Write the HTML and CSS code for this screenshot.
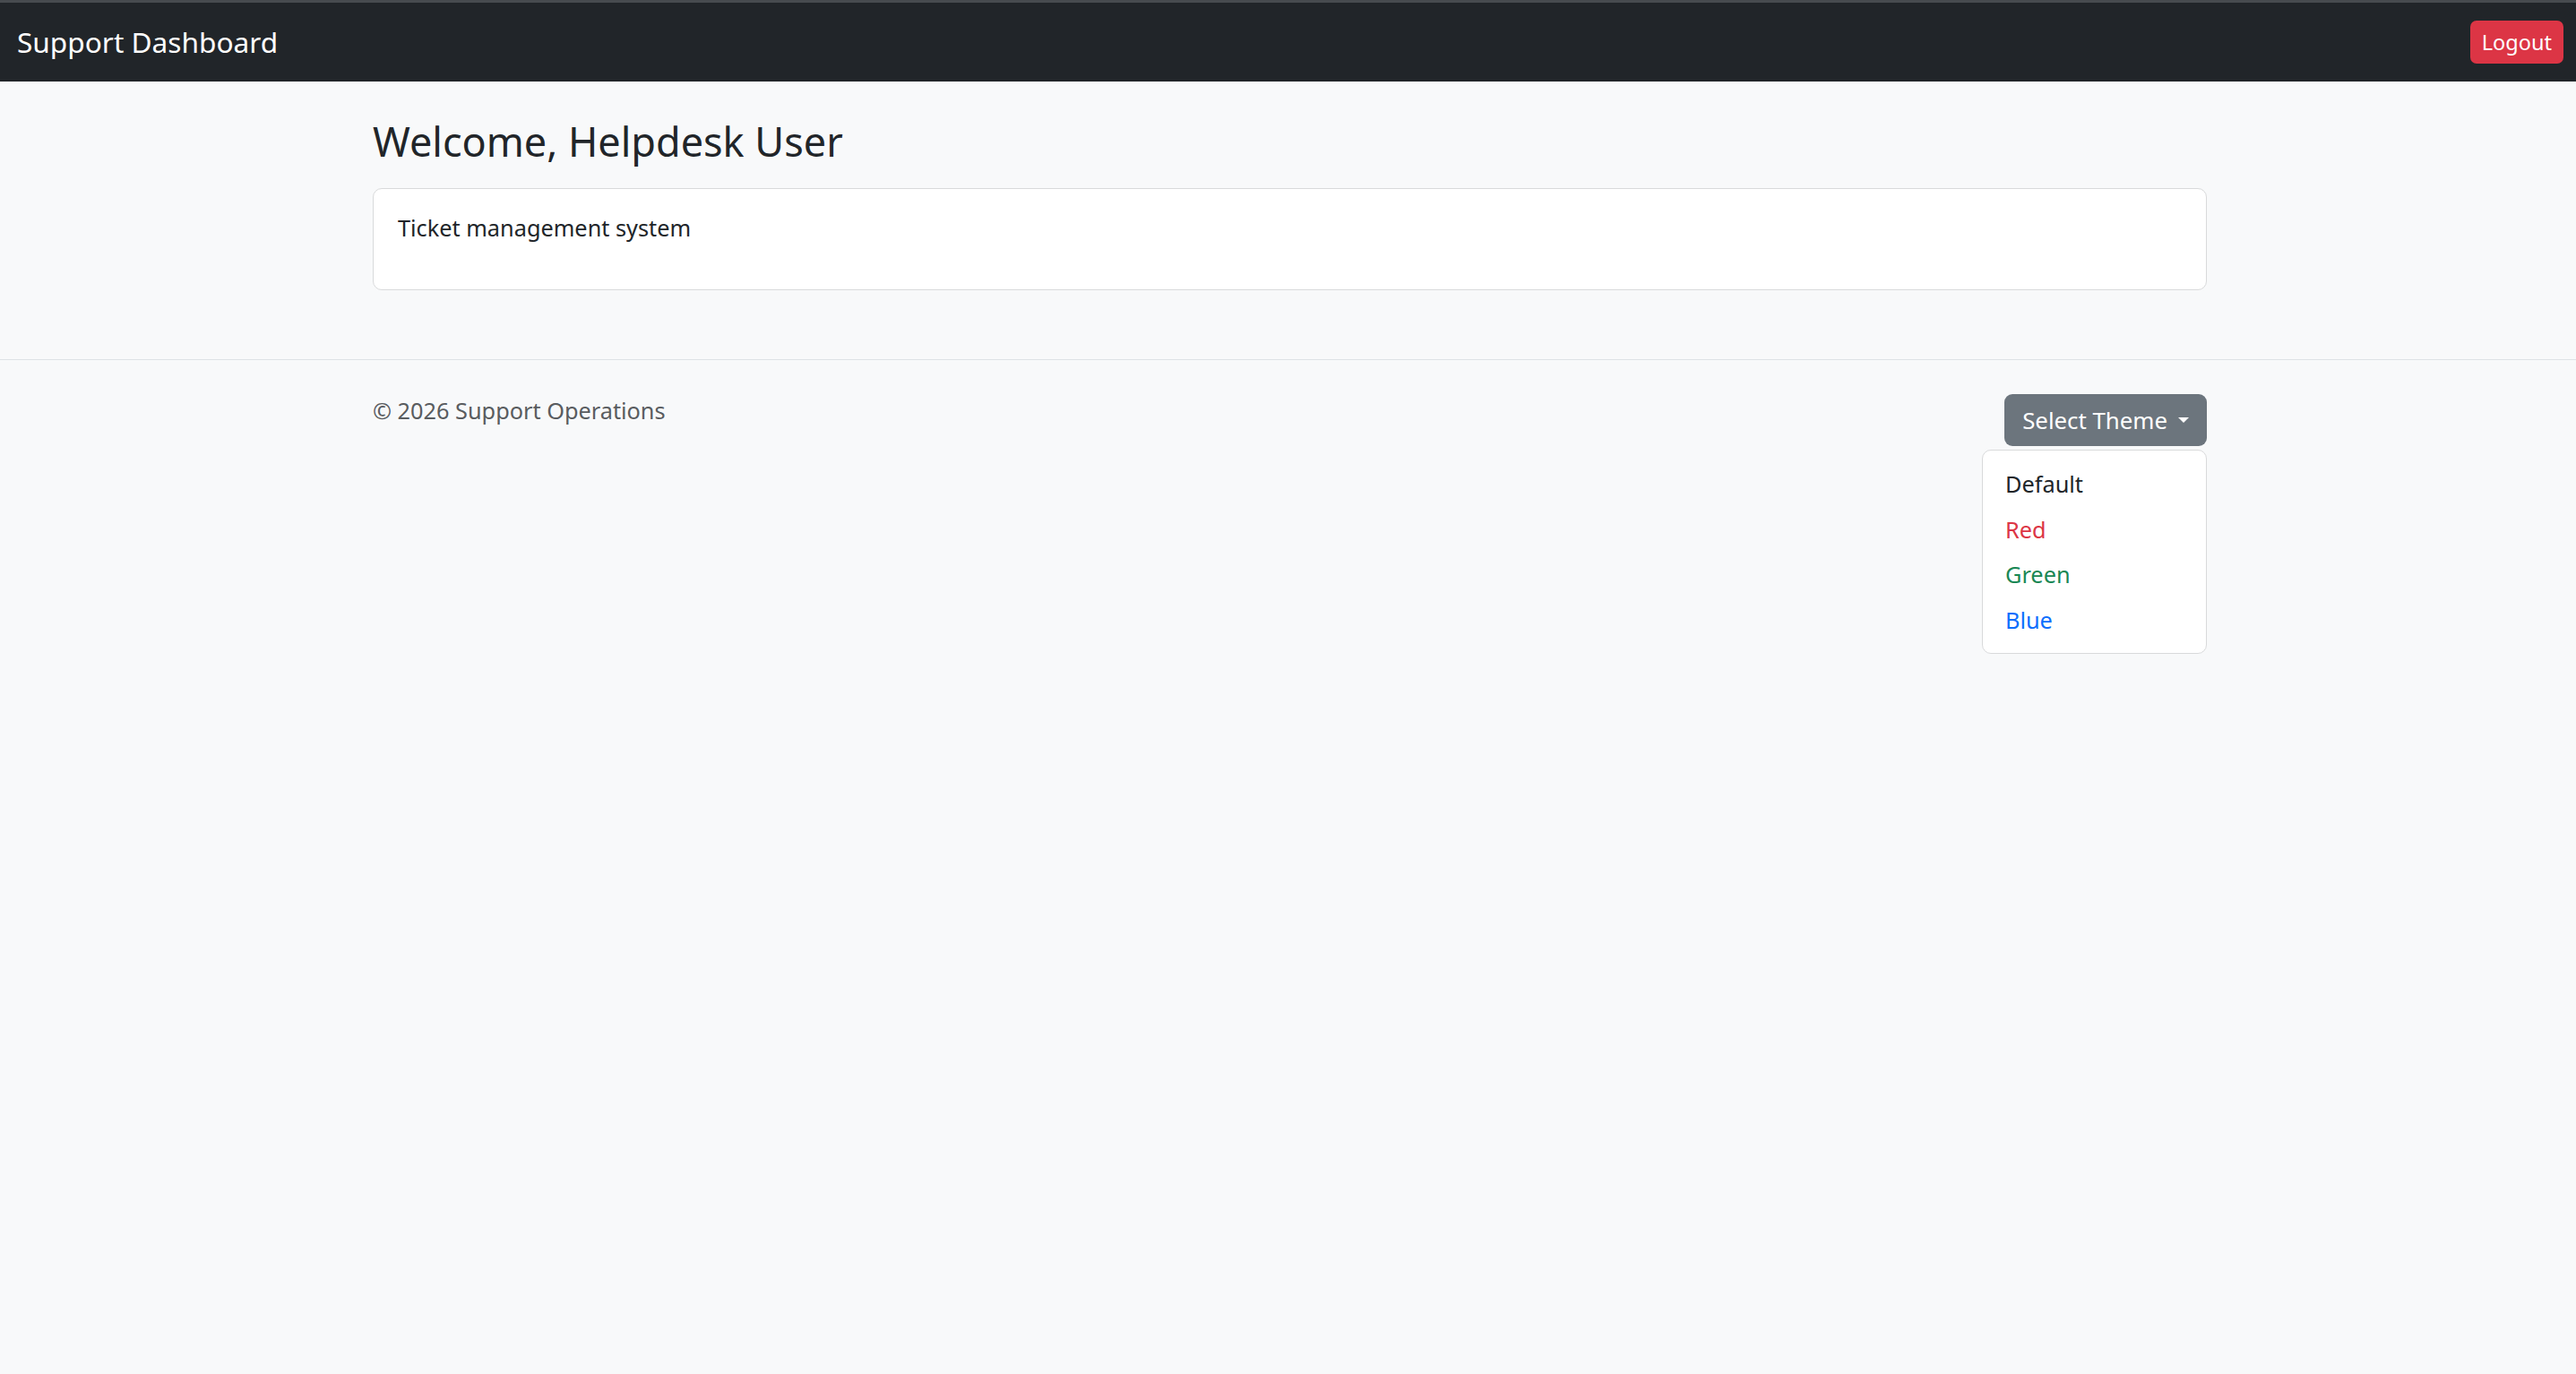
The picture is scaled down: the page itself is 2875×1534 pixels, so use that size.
FILE: index.html
```html
<!DOCTYPE html>
<html lang="en">

<head>
    <meta charset="utf-8">
    <title>Support Dashboard</title>
    <link rel="stylesheet" href="styles.css">
</head>

<body>
    <nav class="topbar">
        <a class="brand" href="#">Support Dashboard</a>
        <button class="btn btn-logout">Logout</button>
    </nav>

    <main class="container">
        <h1 class="welcome">Welcome, Helpdesk User</h1>
        <div class="card">
            <p>Ticket management system</p>
        </div>
    </main>

    <footer class="footer">
        <div class="container footer-inner">
            <p class="copyright">&copy; 2026 Support Operations</p>
            <div class="theme-picker">
                <button class="btn btn-theme">Select Theme <span class="caret"></span></button>
                <ul class="theme-menu">
                    <li><a href="#" class="theme-default">Default</a></li>
                    <li><a href="#" class="theme-red">Red</a></li>
                    <li><a href="#" class="theme-green">Green</a></li>
                    <li><a href="#" class="theme-blue">Blue</a></li>
                </ul>
            </div>
        </div>
    </footer>
</body>

</html>
```

FILE: styles.css
```css
body {
    font-family: "Noto Sans", "Open Sans", sans-serif;
    font-size: 25.3px;
    line-height: 1.5;
    margin: 0;
    padding: 0 0 0 4px;
    color: #212529;
    background-color: #f8f9fa;
}

a {
    text-decoration: none;
}

.topbar {
    display: flex;
    justify-content: space-between;
    align-items: center;
    height: 88px;
    margin-left: -4px;
    padding: 0 14px 0 19px;
    background-color: #212529;
    border-top: 3px solid #474b4f;
}

.brand {
    color: white;
    font-size: 31.6px;
    line-height: 1.5;
}

.btn {
    font-family: inherit;
    border: 1px solid transparent;
    cursor: pointer;
}

.btn-logout {
    background-color: #dc3545;
    color: white;
    font-size: 23.5px;
    line-height: 36px;
    padding: 5px 12px;
    border-radius: 7px;
}

.container {
    width: 2047px;
    margin: 0 auto;
}

main.container {
    padding-bottom: 77px;
}

.welcome {
    font-size: 45px;
    font-weight: 400;
    line-height: 1.2;
    margin: 40px 0 25px;
}

.card {
    background: white;
    border: 1px solid #d9dadb;
    border-radius: 10px;
    padding: 25px 27px;
}

.card p {
    margin: 0 0 24px;
}

.footer {
    margin-left: -4px;
    padding: 38px 0 0 4px;
    border-top: 1px solid #dee2e6;
}

.footer-inner {
    display: flex;
    justify-content: space-between;
    align-items: flex-start;
}

.copyright {
    margin: 0;
    color: #595c5f;
}

.theme-picker {
    display: flex;
    flex-direction: column;
    align-items: flex-end;
    gap: 4px;
}

.btn-theme {
    background-color: #6c757d;
    color: white;
    font-size: 25.8px;
    line-height: 38px;
    padding: 9px 19px;
    border-radius: 9px;
    display: flex;
    align-items: center;
}

.caret {
    display: inline-block;
    margin-left: 12px;
    border-top: 6px solid white;
    border-left: 6px solid transparent;
    border-right: 6px solid transparent;
}

.theme-menu {
    box-sizing: border-box;
    width: 251px;
    margin: 0;
    padding: 12px 0;
    list-style: none;
    background: white;
    border: 1px solid #d9dadb;
    border-radius: 10px;
}

.theme-menu a {
    display: block;
    padding: 6px 25px;
    line-height: 38.6px;
}

.theme-default {
    color: #212529;
}

.theme-red {
    color: #dc3545;
}

.theme-green {
    color: #198754;
}

.theme-blue {
    color: #0d6efd;
}
```
